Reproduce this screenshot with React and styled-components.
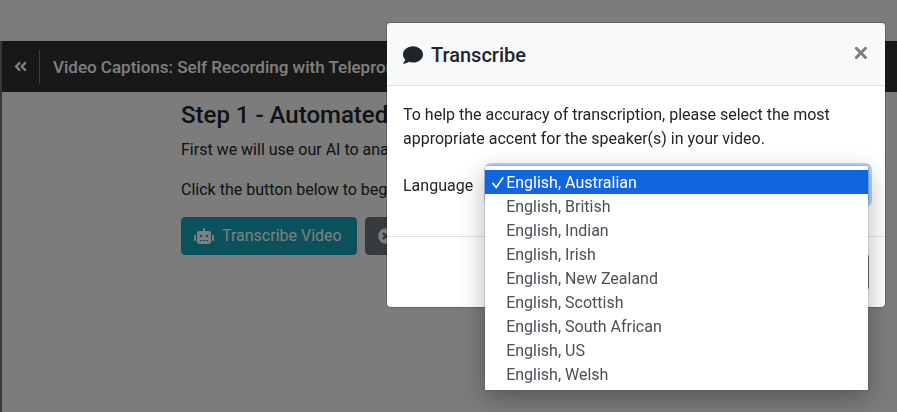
import { useState } from 'react';
import styled, { createGlobalStyle } from 'styled-components';
import { FaAngleDoubleLeft, FaComment, FaRobot, FaTimesCircle } from 'react-icons/fa';

const COLORS = {
    text: '#212529',
    muted: '#495057',
    bar: '#303030',
    info: '#17a2b8',
    secondary: '#6c757d',
    border: '#dee2e6',
    highlight: '#1166dd',
};

const LANGUAGES = [
    'English, Australian',
    'English, British',
    'English, Indian',
    'English, Irish',
    'English, New Zealand',
    'English, Scottish',
    'English, South African',
    'English, US',
    'English, Welsh',
];

const GlobalStyle = createGlobalStyle`
    * {
        box-sizing: border-box;
    }

    body {
        margin: 0;
        background: #f9f9f9;
        color: ${COLORS.text};
        font-family: Roboto, "Liberation Sans", sans-serif;
        font-size: 16px;
        line-height: 24px;
        overflow: hidden;
    }

    button, select {
        font: inherit;
    }

    p {
        margin: 0 0 15px;
        padding-top: 1px;
    }
`;

const Page = styled.div`
    min-height: 100vh;
    padding-top: 41px;
    display: flex;
    flex-direction: column;
`;

const Panel = styled.div`
    flex: 1;
    border-left: 2px solid #707070;
`;

const TitleBar = styled.header`
    display: flex;
    align-items: center;
    height: 51px;
    background: ${COLORS.bar};
    color: #fff;
`;

const BackLink = styled.a`
    display: flex;
    align-items: center;
    justify-content: center;
    width: 38px;
    height: 34px;
    border-right: 1px solid #757575;
    color: inherit;
`;

const BarTitle = styled.h1`
    margin: 0 0 0 13px;
    font-size: 17px;
    font-weight: 500;
    line-height: 22px;
    white-space: nowrap;
`;

const Content = styled.main`
    padding: 9px 179px 0;

    h2 {
        margin: 0 0 7px;
        font-size: 24px;
        font-weight: 500;
        line-height: 29px;
        white-space: nowrap;
    }
`;

const ButtonRow = styled.div`
    display: flex;
    gap: 8px;
`;

const Button = styled.button`
    display: flex;
    align-items: center;
    gap: 8px;
    height: 38px;
    padding: 0 14px 0 12px;
    border: 1px solid ${({ $color }) => $color};
    border-radius: 4px;
    background: ${({ $color }) => $color};
    color: #fff;
    white-space: nowrap;
`;

const Backdrop = styled.div`
    position: fixed;
    inset: 0;
    display: flex;
    align-items: flex-start;
    justify-content: flex-end;
    padding: 22px 11px;
    background: rgba(0, 0, 0, .5);
`;

const Dialog = styled.section`
    width: 100%;
    max-width: 500px;
    border: 1px solid rgba(0, 0, 0, .2);
    border-radius: 5px;
    background: #fff;
    background-clip: padding-box;
`;

const DialogHeader = styled.div`
    display: flex;
    align-items: center;
    justify-content: space-between;
    padding: 16px;
    border-bottom: 1px solid ${COLORS.border};
    border-radius: 4px 4px 0 0;
    background: #f8f9fa;
`;

const DialogTitle = styled.h2`
    display: flex;
    align-items: center;
    gap: 8px;
    margin: 0;
    padding-top: 2px;
    font-size: 20px;
    font-weight: 500;
    line-height: 28px;
`;

const CloseButton = styled.button`
    display: flex;
    padding: 0;
    border: 0;
    background: none;
    color: #7c7d7d;
`;

const DialogBody = styled.div`
    padding: 16px;
`;

const Field = styled.div`
    display: flex;
    align-items: center;
    gap: 14px;
    margin-bottom: 16px;

    label {
        padding-top: 1px;
    }
`;

const SelectBox = styled.div`
    position: relative;
    flex: 1;
`;

const Select = styled.select`
    display: block;
    width: 100%;
    height: 38px;
    padding: 0 12px;
    border: 1px solid #80bdff;
    border-radius: 4px;
    outline: 0;
    background: #fff;
    color: ${COLORS.muted};
    box-shadow: 0 0 0 3px #b3d4f3;
`;

const Menu = styled.ul`
    position: absolute;
    top: 0;
    left: -2px;
    right: 1px;
    margin: 0;
    padding: 4px 0;
    background: #fff;
    box-shadow: 0 0 1px rgba(0, 0, 0, .5), 0 8px 24px rgba(0, 0, 0, .3);
    list-style: none;
`;

const Option = styled.li`
    display: flex;
    align-items: center;
    height: 24px;
    padding-top: 2px;
    background: ${({ $active }) => ($active ? COLORS.highlight : 'transparent')};
    color: ${({ $active }) => ($active ? '#fff' : COLORS.muted)};
    cursor: default;
`;

const CheckSlot = styled.span`
    display: flex;
    width: 21px;
    padding-left: 7px;
`;

const DialogFooter = styled.div`
    display: flex;
    justify-content: flex-end;
    padding: 16px;
    border-top: 1px solid ${COLORS.border};
`;

const CheckIcon = () => (
    <svg width="12" height="12" viewBox="0 0 12 12" fill="none" stroke="currentColor" strokeWidth="1.7" strokeLinecap="round" strokeLinejoin="round" aria-hidden="true">
        <path d="M1 6.5L4.2 10.5L10.8 1" />
    </svg>
);

const CrossIcon = () => (
    <svg width="16" height="16" viewBox="0 0 16 16" stroke="currentColor" strokeWidth="3" strokeLinecap="round" aria-hidden="true">
        <path d="M3.3 2.3L12.5 11.5M12.5 2.3L3.3 11.5" />
    </svg>
);

export default function App() {
    const [language, setLanguage] = useState(LANGUAGES[0]);

    return (
        <>
            <GlobalStyle />
            <Page>
                <Panel>
                    <TitleBar>
                        <BackLink href="#" aria-label="Back"><FaAngleDoubleLeft size={15} /></BackLink>
                        <BarTitle>Video Captions: Self Recording with Teleprompter</BarTitle>
                    </TitleBar>
                    <Content>
                        <h2>Step 1 - Automated Transcription</h2>
                        <p>First we will use our AI to analyse your video.</p>
                        <p>Click the button below to begin.</p>
                        <ButtonRow>
                            <Button $color={COLORS.info}><FaRobot size={20} />Transcribe Video</Button>
                            <Button $color={COLORS.secondary}><FaTimesCircle size={16} />Skip</Button>
                        </ButtonRow>
                    </Content>
                </Panel>
            </Page>
            <Backdrop>
                <Dialog role="dialog" aria-labelledby="dialog-title">
                    <DialogHeader>
                        <DialogTitle id="dialog-title"><FaComment size={20} />Transcribe</DialogTitle>
                        <CloseButton aria-label="Close"><CrossIcon /></CloseButton>
                    </DialogHeader>
                    <DialogBody>
                        <p>To help the accuracy of transcription, please select the most appropriate accent for the speaker(s) in your video.</p>
                        <Field>
                            <label htmlFor="language">Language</label>
                            <SelectBox>
                                <Select id="language" value={language} onChange={(e) => setLanguage(e.target.value)}>
                                    {LANGUAGES.map((name) => <option key={name}>{name}</option>)}
                                </Select>
                                <Menu role="listbox" aria-label="Language">
                                    {LANGUAGES.map((name) => (
                                        <Option
                                            key={name}
                                            role="option"
                                            aria-selected={name === language}
                                            $active={name === language}
                                            onClick={() => setLanguage(name)}
                                        >
                                            <CheckSlot>{name === language && <CheckIcon />}</CheckSlot>
                                            {name}
                                        </Option>
                                    ))}
                                </Menu>
                            </SelectBox>
                        </Field>
                    </DialogBody>
                    <DialogFooter>
                        <Button $color={COLORS.secondary}>Close</Button>
                    </DialogFooter>
                </Dialog>
            </Backdrop>
        </>
    );
}
